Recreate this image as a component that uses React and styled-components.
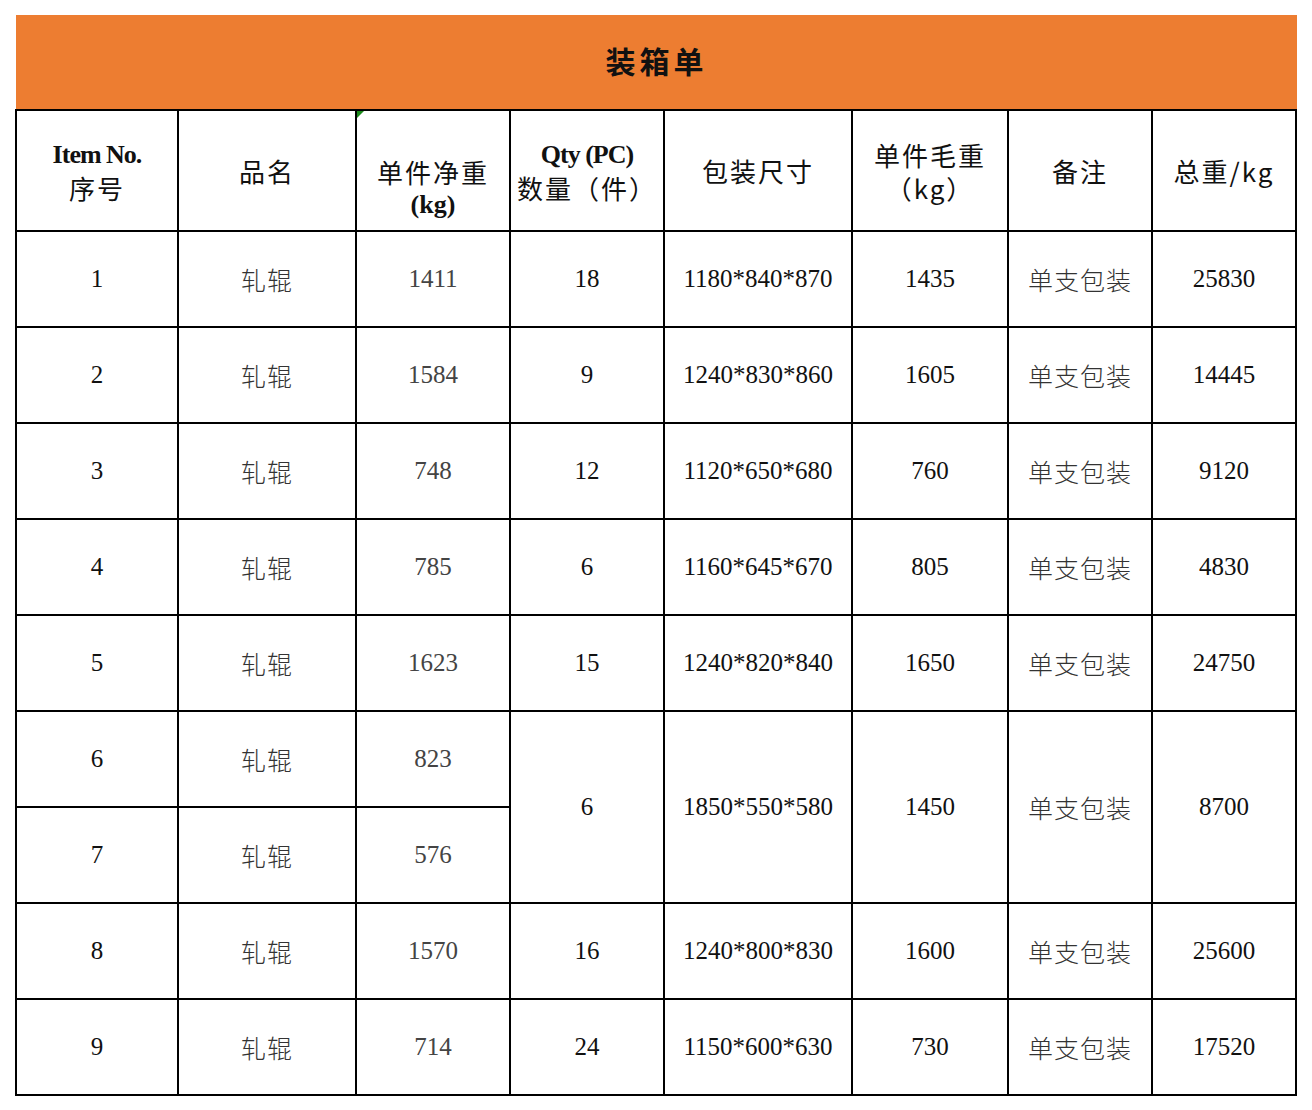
import styled, { createGlobalStyle } from 'styled-components';

const GlobalStyle = createGlobalStyle`
  body {
    margin: 0;
    background: #fff;
    font-family: "Liberation Serif", "Noto Sans CJK SC", serif;
  }
`;

const Page = styled.div`
  padding: 15px 16px 0 15px;
  width: 1282px;
`;

const TitleBar = styled.div`
  height: 94px;
  margin-left: 1px;
  background: #ed7d31;
  display: flex;
  align-items: center;
  justify-content: center;
  padding-bottom: 4px;
  box-sizing: border-box;
  font-family: "Noto Sans CJK SC", sans-serif;
  font-size: 30px;
  font-weight: 700;
  letter-spacing: 4px;
  color: #111;
`;

const Table = styled.table`
  border-collapse: collapse;
  table-layout: fixed;
  width: 1282px;
`;

const HeadCell = styled.th`
  position: relative;
  border: 2px solid #000;
  height: 119px;
  padding: 0;
  text-align: center;
  vertical-align: middle;
  font-weight: 400;
  font-size: 26px;
  line-height: 33px;
  color: #111;
  font-family: "Noto Sans CJK SC", sans-serif;
  letter-spacing: 2px;
`;

const Lowered = styled.div`
  padding-top: 34px;
`;

const Latin = styled.span`
  display: block;
  font-family: "Liberation Serif", serif;
  font-weight: 700;
  letter-spacing: ${(p) => (p.$tight ? '-1px' : '0')};
  font-size: 26px;
`;

const Cell = styled.td`
  border: 2px solid #000;
  height: 94px;
  padding: 0;
  text-align: center;
  vertical-align: middle;
  font-size: 25px;
  color: ${(p) => p.$tone || '#111'};
  font-family: ${(p) =>
    p.$cjk ? '"Noto Sans CJK SC", sans-serif' : '"Liberation Serif", serif'};
  font-weight: ${(p) => (p.$cjk ? 300 : 400)};
  letter-spacing: ${(p) => (p.$cjk ? '1px' : '0')};
`;

const Mark = styled.span`
  position: absolute;
  left: 0;
  top: 0;
  width: 0;
  height: 0;
  border-top: 7px solid #1b8a1b;
  border-right: 7px solid transparent;
`;

const widths = [162, 178, 154, 154, 188, 156, 144, 144];

const rows = [
  ['1', '1411', '18', '1180*840*870', '1435', '25830'],
  ['2', '1584', '9', '1240*830*860', '1605', '14445'],
  ['3', '748', '12', '1120*650*680', '760', '9120'],
  ['4', '785', '6', '1160*645*670', '805', '4830'],
  ['5', '1623', '15', '1240*820*840', '1650', '24750'],
];

const tail = [
  ['8', '1570', '16', '1240*800*830', '1600', '25600'],
  ['9', '714', '24', '1150*600*630', '730', '17520'],
];

function DataRow({ r }) {
  return (
    <tr>
      <Cell>{r[0]}</Cell>
      <Cell $cjk $tone="#333">轧辊</Cell>
      <Cell $tone="#444">{r[1]}</Cell>
      <Cell>{r[2]}</Cell>
      <Cell>{r[3]}</Cell>
      <Cell>{r[4]}</Cell>
      <Cell $cjk $tone="#333">单支包装</Cell>
      <Cell>{r[5]}</Cell>
    </tr>
  );
}

export default function App() {
  return (
    <>
      <GlobalStyle />
      <Page>
        <TitleBar>装箱单</TitleBar>
        <Table>
          <colgroup>
            {widths.map((w, i) => (
              <col key={i} style={{ width: w }} />
            ))}
          </colgroup>
          <thead>
            <tr>
              <HeadCell>
                <Latin $tight>Item No.</Latin>
                序号
              </HeadCell>
              <HeadCell>品名</HeadCell>
              <HeadCell>
                <Mark />
                <Lowered>
                  单件净重
                  <Latin>(kg)</Latin>
                </Lowered>
              </HeadCell>
              <HeadCell>
                <Latin $tight>Qty (PC)</Latin>
                数量（件）
              </HeadCell>
              <HeadCell>包装尺寸</HeadCell>
              <HeadCell>
                单件毛重
                <br />
                （kg）
              </HeadCell>
              <HeadCell>备注</HeadCell>
              <HeadCell>总重/kg</HeadCell>
            </tr>
          </thead>
          <tbody>
            {rows.map((r) => (
              <DataRow key={r[0]} r={r} />
            ))}
            <tr>
              <Cell>6</Cell>
              <Cell $cjk $tone="#333">轧辊</Cell>
              <Cell $tone="#444">823</Cell>
              <Cell rowSpan={2}>6</Cell>
              <Cell rowSpan={2}>1850*550*580</Cell>
              <Cell rowSpan={2}>1450</Cell>
              <Cell rowSpan={2} $cjk $tone="#333">
                单支包装
              </Cell>
              <Cell rowSpan={2}>8700</Cell>
            </tr>
            <tr>
              <Cell>7</Cell>
              <Cell $cjk $tone="#333">轧辊</Cell>
              <Cell $tone="#444">576</Cell>
            </tr>
            {tail.map((r) => (
              <DataRow key={r[0]} r={r} />
            ))}
          </tbody>
        </Table>
      </Page>
    </>
  );
}
